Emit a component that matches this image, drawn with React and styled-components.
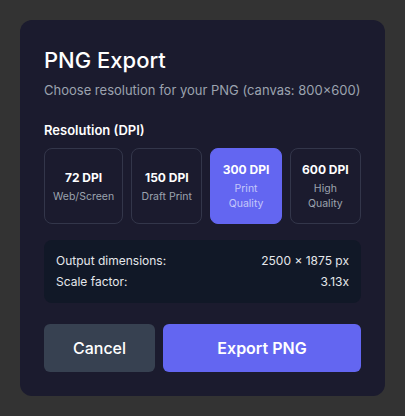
import React, { useState } from 'react'
import styled, { createGlobalStyle } from 'styled-components'

const GlobalStyle = createGlobalStyle`
	body {
		margin: 0;
		background: #333333;
		font-family: Inter, "Noto Sans", sans-serif;
	}
`

const Page = styled.div`
	padding: 20px;
`

const Dialog = styled.div`
	width: 365px;
	box-sizing: border-box;
	padding: 24px;
	background: #1b1b2e;
	border-radius: 12px;
	color: #ffffff;
`

const Title = styled.h2`
	margin: 0;
	font-size: 22px;
	line-height: 32px;
	font-weight: 500;
`

const Subtitle = styled.p`
	margin: 4px 0 0;
	font-size: 13px;
	line-height: 20px;
	color: #9ca3af;
`

const Label = styled.div`
	margin-top: 20px;
	font-size: 13px;
	line-height: 20px;
	font-weight: 600;
`

const Options = styled.div`
	display: flex;
	gap: 8px;
	margin-top: 8px;
`

const Option = styled.button`
	flex: 1 1 0;
	height: 76px;
	padding: 8px;
	display: flex;
	flex-direction: column;
	align-items: center;
	justify-content: center;
	border-radius: 8px;
	border: 1px solid ${props => (props.$active ? '#6366f1' : '#33364a')};
	background: ${props => (props.$active ? '#6366f1' : 'transparent')};
	font-family: inherit;
	cursor: pointer;

	.dpi {
		font-size: 12px;
		line-height: 18px;
		font-weight: 700;
		color: #ffffff;
		white-space: nowrap;
	}

	.desc {
		margin-top: 2px;
		font-size: 10.5px;
		line-height: 15px;
		color: ${props => (props.$active ? '#c4c7fa' : '#9ca3af')};
		text-align: center;
	}
`

const Info = styled.div`
	margin-top: 16px;
	padding: 12px;
	background: #111827;
	border-radius: 8px;
	display: flex;
	flex-direction: column;
	gap: 3px;
`

const InfoRow = styled.div`
	display: flex;
	justify-content: space-between;
	font-size: 12px;
	line-height: 18px;
	color: #e5e7eb;
`

const Actions = styled.div`
	display: flex;
	gap: 8px;
	margin-top: 21px;
`

const Button = styled.button`
	flex: ${props => (props.$primary ? '1 1 auto' : '0 0 111px')};
	height: 48px;
	border: none;
	border-radius: 6px;
	font-family: inherit;
	font-size: 16px;
	font-weight: ${props => (props.$primary ? 600 : 500)};
	color: #ffffff;
	background: ${props => (props.$primary ? '#6366f1' : '#374151')};
	cursor: pointer;
`

const options = [
	{ dpi: 72, desc: 'Web/Screen' },
	{ dpi: 150, desc: 'Draft Print' },
	{ dpi: 300, desc: 'Print Quality' },
	{ dpi: 600, desc: 'High Quality' }
]

export default function App() {
	const [dpi, setDpi] = useState(300)
	const scale = dpi / 96
	const w = Math.round(800 * scale)
	const h = Math.round(600 * scale)

	return (
		<Page>
			<GlobalStyle />
			<Dialog>
				<Title>PNG Export</Title>
				<Subtitle>Choose resolution for your PNG (canvas: 800×600)</Subtitle>
				<Label>Resolution (DPI)</Label>
				<Options>
					{options.map(o => (
						<Option key={o.dpi} $active={o.dpi === dpi} onClick={() => setDpi(o.dpi)}>
							<span className="dpi">{o.dpi} DPI</span>
							<span className="desc">{o.desc}</span>
						</Option>
					))}
				</Options>
				<Info>
					<InfoRow>
						<span>Output dimensions:</span>
						<span>{w} × {h} px</span>
					</InfoRow>
					<InfoRow>
						<span>Scale factor:</span>
						<span>{scale.toFixed(2)}x</span>
					</InfoRow>
				</Info>
				<Actions>
					<Button>Cancel</Button>
					<Button $primary>Export PNG</Button>
				</Actions>
			</Dialog>
		</Page>
	)
}
